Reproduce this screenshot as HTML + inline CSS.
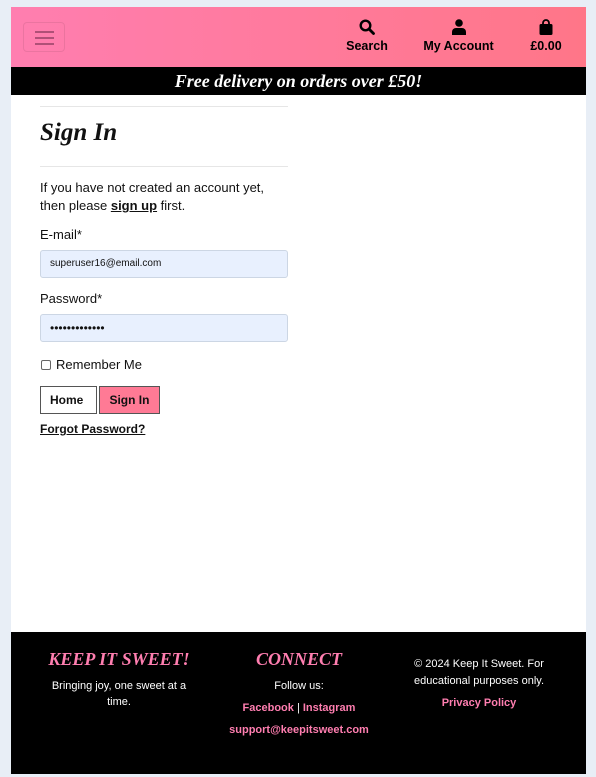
<!DOCTYPE html>
<html><head><meta charset="utf-8"><style>
*{box-sizing:border-box;margin:0;padding:0}
body{width:596px;height:777px;background:#e8eef6;font-family:"Liberation Sans",sans-serif;position:relative;overflow:hidden}
.card{position:absolute;left:11px;top:7px;width:575px;height:767px;background:#fff}
.hdr{position:absolute;left:0;top:0;width:575px;height:60px;background:linear-gradient(90deg,#ff7eb0,#ff7688)}
.burger{position:absolute;left:12px;top:15px;width:42px;height:30px;border:1px solid rgba(0,0,0,.08);border-radius:4px}
.burger i{position:absolute;left:11px;width:19px;height:2px;background:#b05077}
.nav{position:absolute;top:12px;text-align:center;font-weight:bold;font-size:12.5px;color:#000}
.nav svg{display:block;margin:0 auto 4px}
.banner{position:absolute;left:0;top:60px;width:575px;height:28px;background:#000;color:#fff;text-align:center;font:italic bold 18px/28px "Liberation Serif",serif}
.main{position:absolute;left:29px;top:99px;width:248px;color:#111}
hr{border:0;border-top:1px solid #e6e6e6}
h1{font:italic bold 25px/1 "Liberation Serif",serif;margin:13px 0 0;height:46px}
p{font-size:13px;line-height:18px;margin-top:12px}
label{display:block;font-size:13px;margin-top:12px}
.in{height:28px;background:#e8f0fe;border:1px solid #ccd6e4;border-radius:3px;margin-top:8px;font-size:10px;line-height:26px;padding-left:9px}
.btn{display:inline-block;height:28px;line-height:26px;border:1px solid #555;font-weight:bold;font-size:12px;padding:0 9px}
.foot{position:absolute;left:0;top:625px;width:575px;height:142px;background:#000;color:#fff;font-size:11px;text-align:center}
.col{position:absolute;top:18px;width:180px}
.col h3{font:italic bold 18px/1 "Liberation Serif",serif;color:#ff7eb0;margin-bottom:10px}
.pk{color:#ff7eb0;font-weight:bold}
</style></head><body>
<div class="card">
<div class="hdr">
<div class="burger"><i style="top:8px"></i><i style="top:14px"></i><i style="top:20px"></i></div>
<div class="nav" style="left:333px;width:46px"><svg width="16" height="16" viewBox="0 0 16 16"><circle cx="6.5" cy="6.5" r="4.8" fill="none" stroke="#000" stroke-width="2.4"/><path d="M10 10l4.5 4.5" stroke="#000" stroke-width="2.8" stroke-linecap="round"/></svg>Search</div>
<div class="nav" style="left:410px;width:75px"><svg width="14" height="16" viewBox="0 0 14 16"><circle cx="7" cy="4" r="3.8"/><path d="M0 16v-3a4 4 0 0 1 4-4h6a4 4 0 0 1 4 4v3z"/></svg>My Account</div>
<div class="nav" style="left:515px;width:40px"><svg width="14" height="16" viewBox="0 0 14 16"><path d="M4 5V4a3 3 0 0 1 6 0v1" fill="none" stroke="#000" stroke-width="1.8"/><rect x="0.5" y="5" width="13" height="11" rx="1.5"/></svg>£0.00</div>
</div>
<div class="banner">Free delivery on orders over £50!</div>
<div class="main">
<hr><h1>Sign In</h1><hr>
<p>If you have not created an account yet, then please <b><u>sign up</u></b> first.</p>
<label>E-mail*</label>
<div class="in">superuser16@email.com</div>
<label style="margin-top:13px">Password*</label>
<div class="in" style="font-size:12px">•••••••••••••</div>
<div style="font-size:13px;margin-top:15px;display:flex;align-items:center"><span style="width:10px;height:10px;border:1px solid #666;border-radius:2px;margin:0 5px 0 1px"></span>Remember Me</div>
<div style="margin-top:14px"><span class="btn" style="background:#fff;width:57px">Home</span> <span class="btn" style="background:#ff7a95;width:61px;margin-left:-2px">Sign In</span></div>
<div style="font-size:12px;font-weight:bold;text-decoration:underline;margin-top:8px">Forgot Password?</div>
</div>
<div class="foot">
<div class="col" style="left:18px;line-height:16px"><h3>KEEP IT SWEET!</h3>Bringing joy, one sweet at a<br>time.</div>
<div class="col" style="left:198px;line-height:22px"><h3 style="margin-bottom:7px">CONNECT</h3>Follow us:<br><span class="pk">Facebook</span> | <span class="pk">Instagram</span><br><span class="pk">support@keepitsweet.com</span></div>
<div class="col" style="left:378px;top:24px;line-height:17px">© 2024 Keep It Sweet. For educational purposes only.<div class="pk" style="margin-top:5px">Privacy Policy</div></div>
</div>
</div>
</body></html>
